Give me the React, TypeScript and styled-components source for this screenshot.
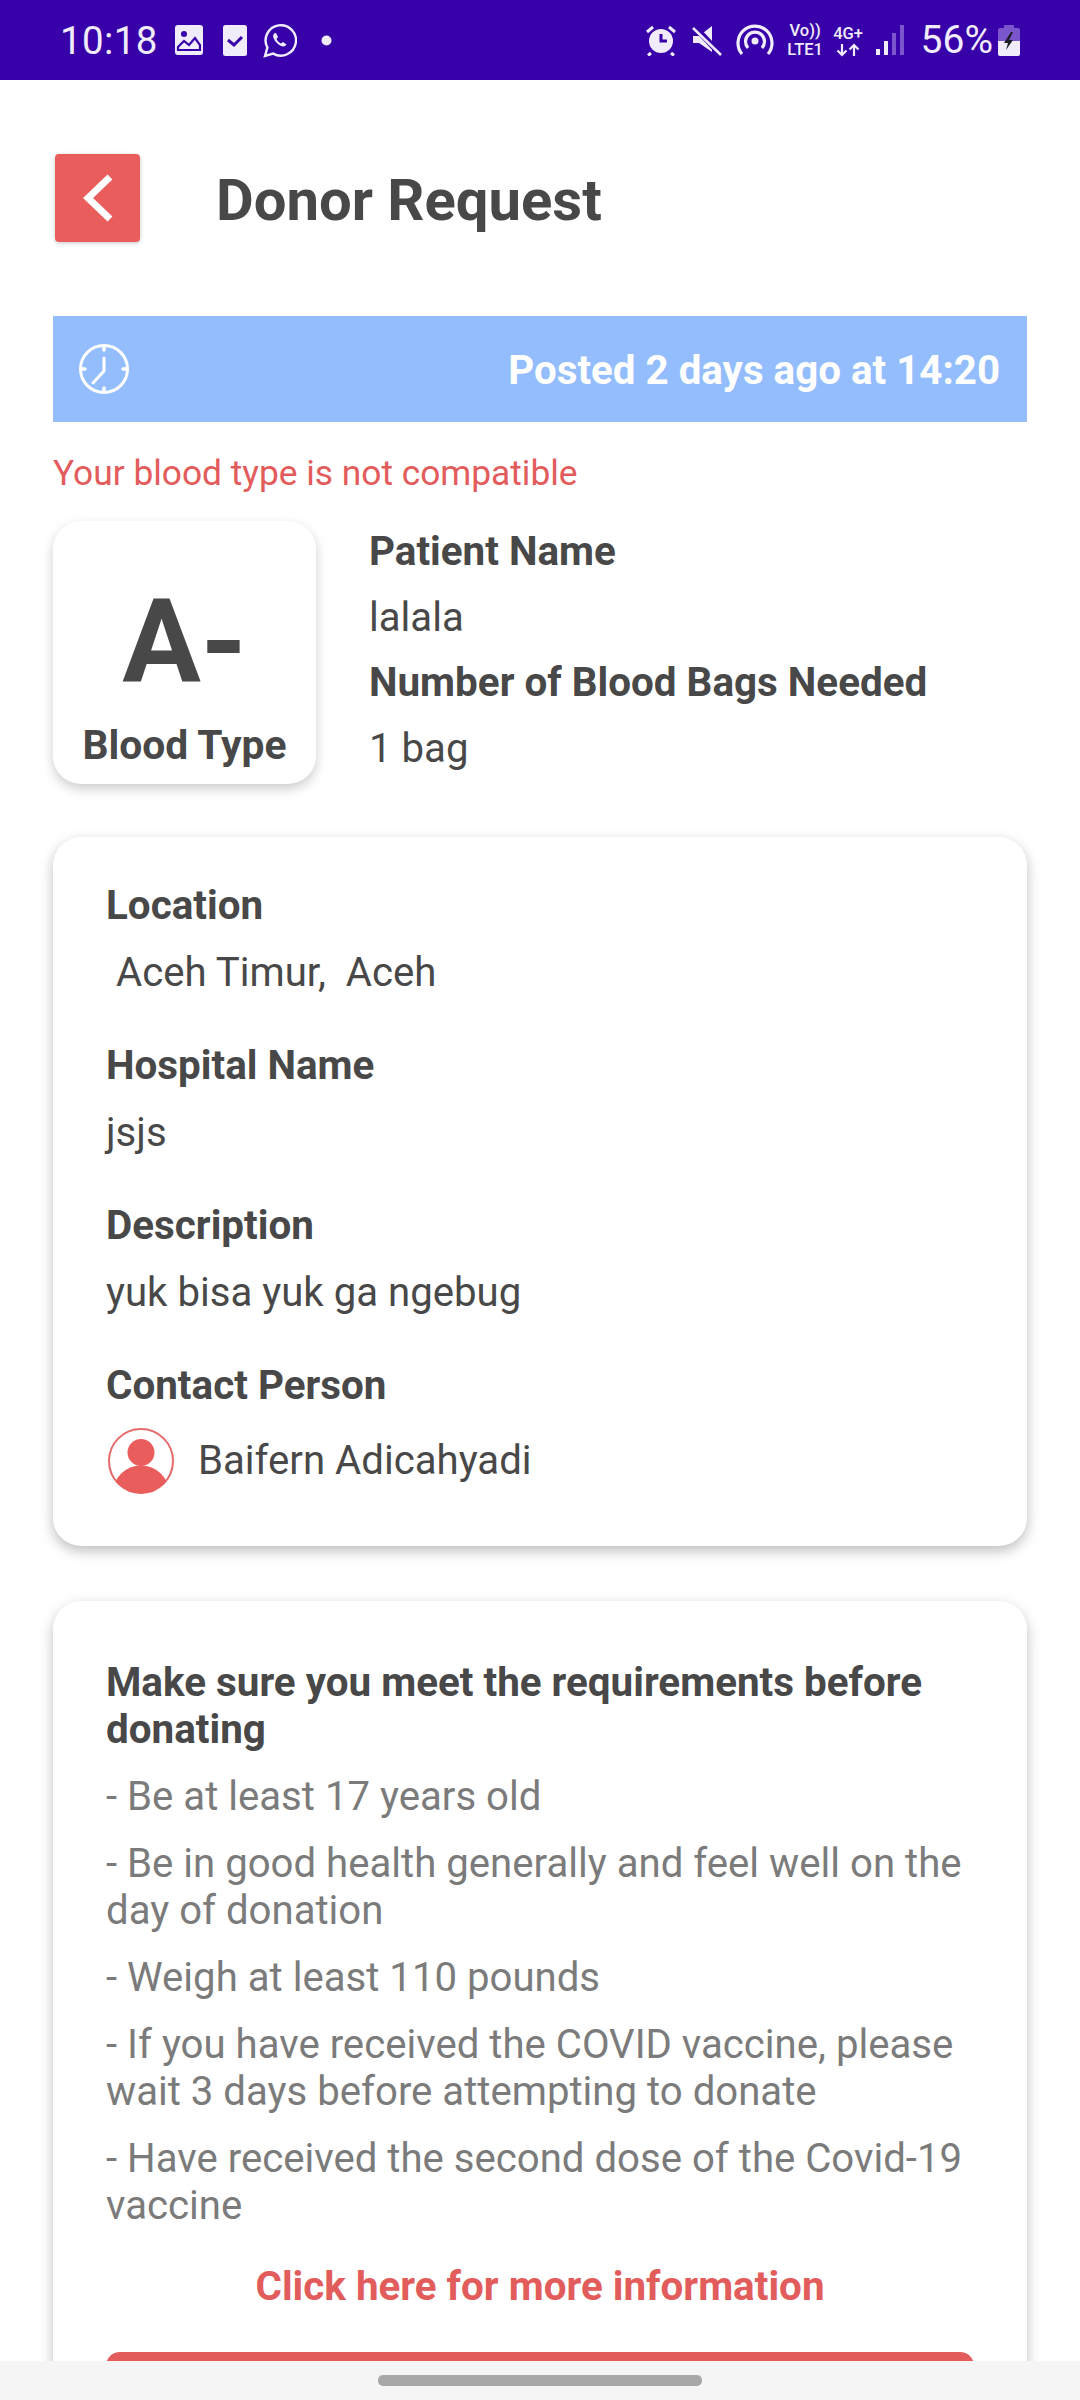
import React from "react"
import styled, { createGlobalStyle } from "styled-components"

const GlobalStyle = createGlobalStyle`
    html, body {
        margin: 0;
        padding: 0;
        background: #ffffff;
    }
    body {
        font-family: Roboto, "Liberation Sans", sans-serif;
        color: #484848;
    }
`

const Screen = styled.div`
    position: relative;
    width: 1080px;
    height: 2400px;
    overflow: hidden;
    background: #ffffff;
`

const StatusBar = styled.div`
    height: 80px;
    background: #3800a8;
    color: #f1ecfb;
    display: flex;
    align-items: center;
    justify-content: space-between;
    padding: 0 60px;
`

const StatusGroup = styled.div`
    display: flex;
    align-items: center;
`

const Clock = styled.span`
    font-size: 38.5px;
    letter-spacing: 0.4px;
    margin-right: 17px;
`

const Percent = styled.span`
    font-size: 39px;
    margin: 0 5px 0 17px;
`

const StatusIcon = styled.svg<{ $gap?: number }>`
    display: block;
    margin-right: ${({ $gap }) => $gap ?? 0}px;
`

const Header = styled.header`
    display: flex;
    align-items: center;
    padding: 74px 0 0 55px;
`

const BackButton = styled.button`
    width: 85px;
    height: 88px;
    border: 0;
    padding: 0;
    border-radius: 4px;
    background: #ea5d5d;
    box-shadow: 0 1px 4px rgba(0, 0, 0, 0.22);
    display: flex;
    align-items: center;
    justify-content: center;
`

const Title = styled.h1`
    margin: 3px 0 0 76px;
    font-family: Roboto, sans-serif;
    font-size: 58px;
    line-height: 72px;
    font-weight: 700;
    color: #484848;
`

const Content = styled.main`
    padding: 74px 53px 0;
`

const PostedBanner = styled.div`
    height: 106px;
    background: #93bdfd;
    display: flex;
    align-items: center;
    justify-content: space-between;
    padding: 0 27px 0 25px;
`

const PostedText = styled.span`
    color: #ffffff;
    font-size: 40.3px;
    font-weight: 700;
    padding-top: 2px;
`

const ErrorText = styled.div`
    color: #e25c5c;
    font-size: 35.3px;
    line-height: 44px;
    margin-top: 29px;
`

const TopRow = styled.section`
    display: flex;
    margin-top: 26px;
`

const BloodCard = styled.div`
    flex: none;
    width: 263px;
    height: 263px;
    border-radius: 28px;
    background: #ffffff;
    box-shadow: 0 5px 12px rgba(0, 0, 0, 0.2);
    display: flex;
    flex-direction: column;
    align-items: center;
`

const BloodValue = styled.div`
    font-size: 117px;
    line-height: 120px;
    font-weight: 700;
    margin-top: 61px;
`

const BloodLabel = styled.div`
    font-size: 40.8px;
    line-height: 46px;
    font-weight: 700;
    margin-top: 20px;
`

const Label = styled.div`
    font-size: 40.4px;
    line-height: 68px;
    font-weight: 700;
    color: #484848;
`

const Value = styled.div`
    font-size: 40.15px;
    line-height: 66px;
    color: #484848;
    white-space: pre;
`

const PatientInfo = styled.div`
    margin-left: 53px;
    margin-top: -2px;

    ${Label}, ${Value} {
        line-height: 65.5px;
    }
`

const Card = styled.section`
    background: #ffffff;
    border-radius: 28px;
    box-shadow: 0 5px 13px rgba(0, 0, 0, 0.26);
`

const DetailCard = styled(Card)`
    margin-top: 53px;
    height: 709px;
    padding: 35px 53px 0;
    box-sizing: border-box;
`

const Field = styled.div`
    margin-bottom: 26px;
`

const ContactRow = styled.div`
    display: flex;
    align-items: center;
    margin: 7px 0 0 1px;
`

const ContactName = styled(Value)`
    margin-left: 23px;
`

const RequirementsCard = styled(Card)`
    margin-top: 55px;
    height: 900px;
    padding: 58px 53px 0;
    box-sizing: border-box;
`

const RequirementsTitle = styled.div`
    font-size: 40.4px;
    line-height: 47px;
    font-weight: 700;
    color: #484848;
`

const RequirementsList = styled.div`
    margin-top: 20px;
    display: flex;
    flex-direction: column;
    gap: 20px;
`

const Requirement = styled.div`
    font-size: 40.15px;
    line-height: 47px;
    color: #7b7b7b;
`

const MoreInfo = styled.div`
    margin-top: 34px;
    text-align: center;
    font-size: 40.4px;
    line-height: 47px;
    font-weight: 700;
    color: #e25c5c;
`

const DonateButton = styled.div`
    margin-top: 42px;
    height: 90px;
    border-radius: 14px;
    background: #e25c5c;
`

const NavBar = styled.div`
    position: absolute;
    left: 0;
    right: 0;
    bottom: 0;
    height: 39px;
    background: #f5f5f5;
    display: flex;
    justify-content: center;
    padding-top: 14px;
    box-sizing: border-box;
`

const NavHandle = styled.div`
    width: 324px;
    height: 11px;
    border-radius: 5px;
    background: #a8a8a8;
`

const NetworkStack = styled.div<{ $width: number; $gap: number }>`
    width: ${({ $width }) => $width}px;
    display: flex;
    flex-direction: column;
    align-items: center;
    font-size: 16.5px;
    line-height: 19px;
    font-weight: 500;
    white-space: nowrap;
    margin-right: ${({ $gap }) => $gap}px;
`

const requirements = [
    "- Be at least 17 years old",
    "- Be in good health generally and feel well on the day of donation",
    "- Weigh at least 110 pounds",
    "- If you have received the COVID vaccine, please wait 3 days before attempting to donate",
    "- Have received the second dose of the Covid-19 vaccine",
]

function GalleryIcon() {
    return (
        <StatusIcon width="28" height="30" viewBox="0 0 28 30" $gap={20}>
            <rect width="28" height="30" rx="3" fill="currentColor" />
            <circle cx="9" cy="9" r="3" fill="#3800a8" />
            <path d="M3 25v-3l6-6 5 4 6-7 5 7v5z" fill="none" stroke="#3800a8" strokeWidth="2.2" />
        </StatusIcon>
    )
}

function CheckIcon() {
    return (
        <StatusIcon width="24" height="31" viewBox="0 0 24 31" $gap={16}>
            <rect width="24" height="31" rx="2.5" fill="currentColor" />
            <path d="M5 15l6 5 8-8" fill="none" stroke="#3800a8" strokeWidth="3" />
        </StatusIcon>
    )
}

function WhatsappIcon() {
    return (
        <StatusIcon width="34" height="35" viewBox="0 0 34 35" $gap={24}>
            <path
                d="M2 33l2.400-8.400A15.200 15.200 0 1 1 10.200 30.600z"
                fill="none"
                stroke="currentColor"
                strokeWidth="2.400"
            />
            <path
                d="M12 10c-2 1-2.500 3-1 6 1.500 3 4 5.500 7 7 2.500 1 4.500 .5 5.500-1.500l-3.500-2.500-2 1.500c-2-1-3.500-2.500-4.500-4.500l1.500-2-2-4z"
                fill="currentColor"
            />
        </StatusIcon>
    )
}

function AlarmIcon() {
    return (
        <StatusIcon width="30" height="31" viewBox="0 0 30 31" $gap={16}>
            <circle cx="15" cy="16" r="12" fill="currentColor" />
            <path d="M15 9v7h6" fill="none" stroke="#3800a8" strokeWidth="3" />
            <path d="M1 7l6-5M29 7l-6-5M5 28l-3 2.500M25 28l3 2.500" stroke="currentColor" strokeWidth="3" />
        </StatusIcon>
    )
}

function MuteIcon() {
    return (
        <StatusIcon width="30" height="31" viewBox="0 0 30 31" $gap={14}>
            <path d="M1 11h6l13-10v26l-13-9h-6z" fill="currentColor" />
            <path d="M2 1l27 29" stroke="#3800a8" strokeWidth="6" />
            <path d="M1 3l28 27" stroke="currentColor" strokeWidth="2.500" />
        </StatusIcon>
    )
}

function HotspotIcon() {
    return (
        <StatusIcon width="38" height="32" viewBox="0 0 38 32" $gap={12}>
            <path
                d="M6 30a17 17 0 1 1 26 0M12 24a9.500 9.500 0 1 1 14 0"
                fill="none"
                stroke="currentColor"
                strokeWidth="3.200"
            />
            <circle cx="19" cy="17" r="3.500" fill="currentColor" />
        </StatusIcon>
    )
}

function DataArrows() {
    return (
        <svg width="24" height="14" viewBox="0 0 24 14">
            <path
                d="M6 1v11M1.500 7.500L6 12l4.500-4.500M18 13V2M13.500 6.500L18 2l4.500 4.500"
                fill="none"
                stroke="currentColor"
                strokeWidth="2.200"
            />
        </svg>
    )
}

function SignalIcon() {
    return (
        <StatusIcon width="28" height="30" viewBox="0 0 28 30">
            <rect x="0" y="24" width="4" height="6" fill="currentColor" />
            <rect x="8" y="16" width="4" height="14" fill="currentColor" />
            <rect x="16" y="8" width="4" height="22" fill="#7a55cc" />
            <rect x="24" y="0" width="4" height="30" fill="#7a55cc" />
        </StatusIcon>
    )
}

function BatteryIcon() {
    return (
        <StatusIcon width="22" height="33" viewBox="0 0 22 33">
            <path d="M6 2a1 1 0 0 1 1-1h8a1 1 0 0 1 1 1v2h4a2 2 0 0 1 2 2v11h-22v-11a2 2 0 0 1 2-2h4z" fill="#7a55cc" />
            <path d="M0 17h22v13a2 2 0 0 1-2 2h-18a2 2 0 0 1-2-2z" fill="currentColor" />
            <path d="M13 8l-7 11h4l-2 7 7-10h-4l4-8z" fill="#1d1d26" />
        </StatusIcon>
    )
}

function BackIcon() {
    return (
        <svg width="30" height="48" viewBox="0 0 30 48">
            <path d="M27 3L5 24l22 21" fill="none" stroke="#ffffff" strokeWidth="7" />
        </svg>
    )
}

function ClockIcon() {
    return (
        <svg width="52" height="52" viewBox="0 0 52 52">
            <circle cx="26" cy="26" r="23.500" fill="none" stroke="#ffffff" strokeWidth="3" />
            <path
                d="M26 4v3M26 45v3M4 26h3M45 26h3"
                stroke="#ffffff"
                strokeWidth="3.500"
                strokeLinecap="round"
            />
            <path
                d="M26 15v13l-11 12"
                fill="none"
                stroke="#ffffff"
                strokeWidth="3"
                strokeLinecap="round"
                strokeLinejoin="round"
            />
        </svg>
    )
}

function AvatarIcon() {
    return (
        <svg width="68" height="68" viewBox="0 0 68 68">
            <defs>
                <clipPath id="avatar-clip">
                    <circle cx="34" cy="34" r="32.500" />
                </clipPath>
            </defs>
            <circle cx="34" cy="34" r="32" fill="#ffffff" stroke="#e56a6a" strokeWidth="2" />
            <circle cx="34" cy="25.500" r="13.500" fill="#ea5d5d" />
            <ellipse cx="34" cy="66" rx="28" ry="27.500" fill="#ea5d5d" clipPath="url(#avatar-clip)" />
        </svg>
    )
}

export default function App() {
    return (
        <Screen>
            <GlobalStyle />
            <StatusBar>
                <StatusGroup>
                    <Clock>10:18</Clock>
                    <GalleryIcon />
                    <CheckIcon />
                    <WhatsappIcon />
                    <StatusIcon width="11" height="11" viewBox="0 0 11 11">
                        <circle cx="5.500" cy="5.500" r="5" fill="currentColor" />
                    </StatusIcon>
                </StatusGroup>
                <StatusGroup>
                    <AlarmIcon />
                    <MuteIcon />
                    <HotspotIcon />
                    <NetworkStack $width={39} $gap={8}>
                        <span>Vo))</span>
                        <span>LTE1</span>
                    </NetworkStack>
                    <NetworkStack $width={31} $gap={12}>
                        <span>4G+</span>
                        <DataArrows />
                    </NetworkStack>
                    <SignalIcon />
                    <Percent>56%</Percent>
                    <BatteryIcon />
                </StatusGroup>
            </StatusBar>

            <Header>
                <BackButton aria-label="Back">
                    <BackIcon />
                </BackButton>
                <Title>Donor Request</Title>
            </Header>

            <Content>
                <PostedBanner>
                    <ClockIcon />
                    <PostedText>Posted 2 days ago at 14:20</PostedText>
                </PostedBanner>
                <ErrorText>Your blood type is not compatible</ErrorText>

                <TopRow>
                    <BloodCard>
                        <BloodValue>A-</BloodValue>
                        <BloodLabel>Blood Type</BloodLabel>
                    </BloodCard>
                    <PatientInfo>
                        <Label>Patient Name</Label>
                        <Value>lalala</Value>
                        <Label>Number of Blood Bags Needed</Label>
                        <Value>1 bag</Value>
                    </PatientInfo>
                </TopRow>

                <DetailCard>
                    <Field>
                        <Label>Location</Label>
                        <Value> Aceh Timur,  Aceh</Value>
                    </Field>
                    <Field>
                        <Label>Hospital Name</Label>
                        <Value>jsjs</Value>
                    </Field>
                    <Field>
                        <Label>Description</Label>
                        <Value>yuk bisa yuk ga ngebug</Value>
                    </Field>
                    <Field>
                        <Label>Contact Person</Label>
                        <ContactRow>
                            <AvatarIcon />
                            <ContactName>Baifern Adicahyadi</ContactName>
                        </ContactRow>
                    </Field>
                </DetailCard>

                <RequirementsCard>
                    <RequirementsTitle>
                        Make sure you meet the requirements before donating
                    </RequirementsTitle>
                    <RequirementsList>
                        {requirements.map((item) => (
                            <Requirement key={item}>{item}</Requirement>
                        ))}
                    </RequirementsList>
                    <MoreInfo>Click here for more information</MoreInfo>
                    <DonateButton />
                </RequirementsCard>
            </Content>

            <NavBar>
                <NavHandle />
            </NavBar>
        </Screen>
    )
}
